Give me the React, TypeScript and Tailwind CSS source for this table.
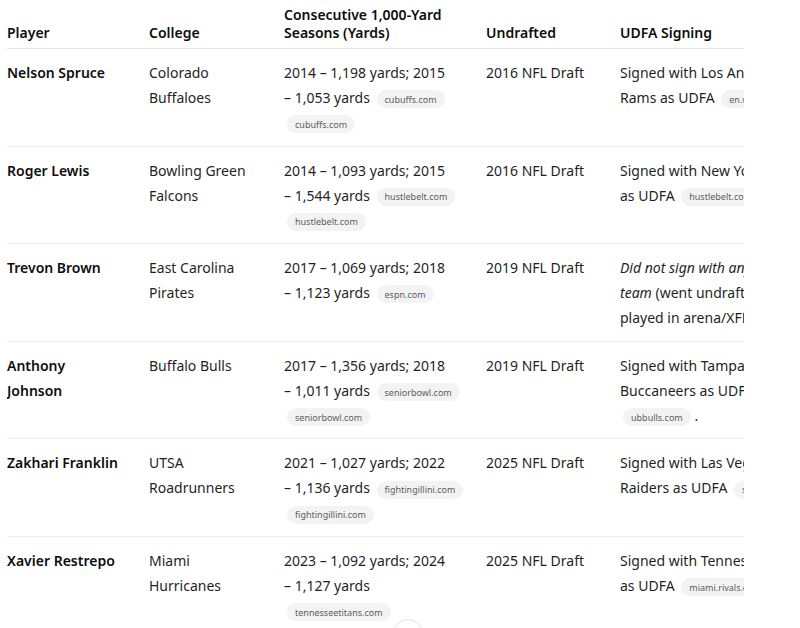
import React from 'react';

type Row = {
  player: React.ReactNode[];
  college: React.ReactNode[];
  seasons: React.ReactNode[];
  draft: string;
  signing: React.ReactNode[];
};

function Pill({ children }: { children: React.ReactNode }) {
  return (
    <span className="ml-[3px] inline-flex h-[18px] items-center rounded-full bg-[#f3f3f3] px-2 align-middle text-[9px] leading-none text-[#5d5d5d]">
      {children}
    </span>
  );
}

const rows: Row[] = [
  {
    player: ['Nelson Spruce'],
    college: ['Colorado', 'Buffaloes'],
    seasons: [
      '2014 – 1,198 yards; 2015',
      <>– 1,053 yards <Pill>cubuffs.com</Pill></>,
      <Pill>cubuffs.com</Pill>,
    ],
    draft: '2016 NFL Draft',
    signing: ['Signed with Los Angeles', <>Rams as UDFA <Pill>en.wikipedia.org</Pill></>],
  },
  {
    player: ['Roger Lewis'],
    college: ['Bowling Green', 'Falcons'],
    seasons: [
      '2014 – 1,093 yards; 2015',
      <>– 1,544 yards <Pill>hustlebelt.com</Pill></>,
      <Pill>hustlebelt.com</Pill>,
    ],
    draft: '2016 NFL Draft',
    signing: ['Signed with New York Giants', <>as UDFA <Pill>hustlebelt.com</Pill></>],
  },
  {
    player: ['Trevon Brown'],
    college: ['East Carolina', 'Pirates'],
    seasons: ['2017 – 1,069 yards; 2018', <>– 1,123 yards <Pill>espn.com</Pill></>],
    draft: '2019 NFL Draft',
    signing: [
      <em>Did not sign with any NFL</em>,
      <><em>team</em> (went undrafted;</>,
      'played in arena/XFL)',
    ],
  },
  {
    player: ['Anthony', 'Johnson'],
    college: ['Buffalo Bulls'],
    seasons: [
      '2017 – 1,356 yards; 2018',
      <>– 1,011 yards <Pill>seniorbowl.com</Pill></>,
      <Pill>seniorbowl.com</Pill>,
    ],
    draft: '2019 NFL Draft',
    signing: ['Signed with Tampa Bay', 'Buccaneers as UDFA', <><Pill>ubbulls.com</Pill> .</>],
  },
  {
    player: ['Zakhari Franklin'],
    college: ['UTSA', 'Roadrunners'],
    seasons: [
      '2021 – 1,027 yards; 2022',
      <>– 1,136 yards <Pill>fightingillini.com</Pill></>,
      <Pill>fightingillini.com</Pill>,
    ],
    draft: '2025 NFL Draft',
    signing: ['Signed with Las Vegas', <>Raiders as UDFA <Pill>si.com</Pill></>],
  },
  {
    player: ['Xavier Restrepo'],
    college: ['Miami', 'Hurricanes'],
    seasons: ['2023 – 1,092 yards; 2024', '– 1,127 yards', <Pill>tennesseetitans.com</Pill>],
    draft: '2025 NFL Draft',
    signing: ['Signed with Tennessee Titans', <>as UDFA <Pill>miami.rivals.com</Pill></>],
  },
];

function Lines({ items, bold = false }: { items: React.ReactNode[]; bold?: boolean }) {
  return (
    <div className={bold ? 'font-semibold text-[#0d0d0d]' : 'text-[#1f1f1f]'}>
      {items.map((line, i) => (
        <div key={i} className="h-[25px] whitespace-nowrap leading-[25px]">
          {line}
        </div>
      ))}
    </div>
  );
}

export default function App() {
  return (
    <div className="relative h-[628px] w-[800px] overflow-hidden bg-white font-['Noto_Sans',sans-serif] text-[14px]">
      <div className="ml-[7px] w-[737px] overflow-hidden">
        <div className="w-[900px]">
          {/* Encabezado */}
          <div className="grid grid-cols-[142px_135px_202px_134px_1fr] items-end border-b border-[#e3e3e3] pt-[6px] pb-[6px] text-[14px] font-semibold leading-[18px] text-[#0d0d0d]">
            <div>Player</div>
            <div>College</div>
            <div>
              Consecutive 1,000-Yard
              <br />
              Seasons (Yards)
            </div>
            <div>Undrafted</div>
            <div>UDFA Signing</div>
          </div>

          {/* Filas */}
          {rows.map((row, i) => (
            <div
              key={i}
              className="grid grid-cols-[142px_135px_202px_134px_1fr] items-start border-b border-[#ededed] pt-[11px] pb-[10.6px]"
            >
              <Lines items={row.player} bold />
              <Lines items={row.college} />
              <Lines items={row.seasons} />
              <Lines items={[row.draft]} />
              <Lines items={row.signing} />
            </div>
          ))}
        </div>
      </div>

      {/* Botón de desplazamiento */}
      <div className="absolute left-[392px] top-[619px] h-[32px] w-[32px] rounded-full border border-[#e3e3e3] bg-white" />
    </div>
  );
}
